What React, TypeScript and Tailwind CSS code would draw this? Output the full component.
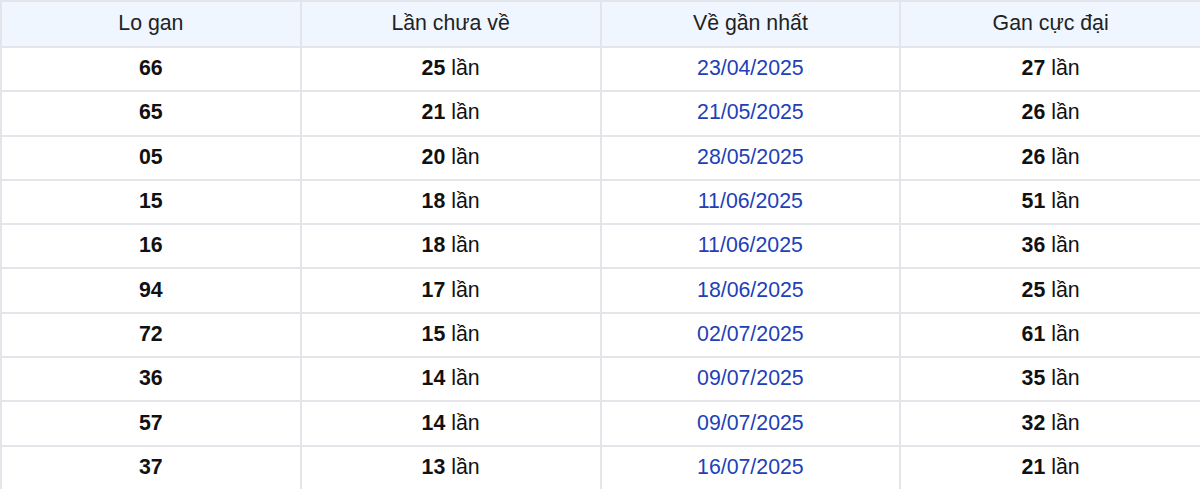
import React from 'react';

const rows: [string, number, string, number][] = [
  ['66', 25, '23/04/2025', 27],
  ['65', 21, '21/05/2025', 26],
  ['05', 20, '28/05/2025', 26],
  ['15', 18, '11/06/2025', 51],
  ['16', 18, '11/06/2025', 36],
  ['94', 17, '18/06/2025', 25],
  ['72', 15, '02/07/2025', 61],
  ['36', 14, '09/07/2025', 35],
  ['57', 14, '09/07/2025', 32],
  ['37', 13, '16/07/2025', 21],
];

const headers = ['Lo gan', 'Lần chưa về', 'Về gần nhất', 'Gan cực đại'];

export default function App() {
  return (
    <div className="w-[1200px] h-[489px] overflow-hidden bg-white font-['Liberation_Sans',Arial,sans-serif] text-[21.3px] text-[#111]">
      <table className="w-full table-fixed border-collapse">
        <thead>
          <tr className="h-[46px] bg-[#eff6ff]">
            {headers.map((h, i) => (
              <th
                key={h}
                className={`font-normal text-center text-[#222] border-t-2 border-b-2 border-l-2 border-[#e3e5ea] ${i === 3 ? 'border-r-0' : ''}`}
              >
                {h}
              </th>
            ))}
          </tr>
        </thead>
        <tbody>
          {rows.map(([lo, chua, date, max]) => (
            <tr key={lo + date} className="h-[44.3px]">
              <td className="text-center font-bold border-b-2 border-l-2 border-[#e3e5ea]">{lo}</td>
              <td className="text-center border-b-2 border-l-2 border-[#e3e5ea]">
                <span className="font-bold">{chua}</span> lần
              </td>
              <td className="text-center text-[#2140b8] border-b-2 border-l-2 border-[#e3e5ea]">{date}</td>
              <td className="text-center border-b-2 border-l-2 border-[#e3e5ea]">
                <span className="font-bold">{max}</span> lần
              </td>
            </tr>
          ))}
        </tbody>
      </table>
    </div>
  );
}
